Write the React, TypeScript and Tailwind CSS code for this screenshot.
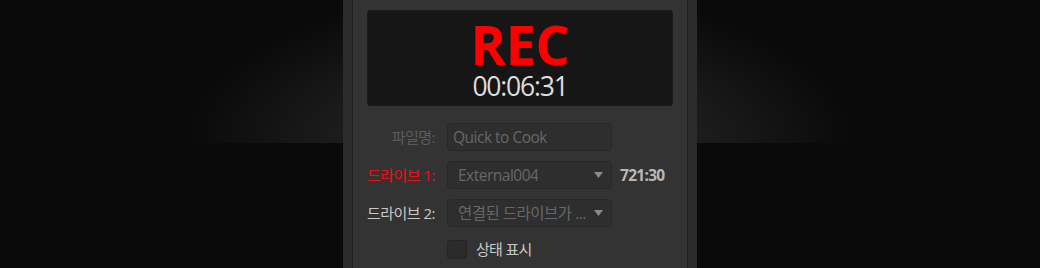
const font = { fontFamily: '"Open Sans", "Noto Sans CJK KR", sans-serif' };

function Caret() {
  return (
    <svg width="9" height="6" viewBox="0 0 9 6" className="shrink-0">
      <path d="M0 0h9L4.5 6z" fill="#8a8a8a" />
    </svg>
  );
}

function Field({ children, select }: { children: React.ReactNode; select?: boolean }) {
  return (
    <div
      className={
        select
          ? "flex h-[28px] w-[165px] items-center justify-between rounded-[4px] border border-[#282828] bg-[#2e2e2e] pr-[8px] pl-[10px]"
          : "flex h-[28px] w-[165px] items-center justify-between rounded-[4px] border border-[#282828] bg-[#2e2e2e] pr-[8px] pl-[5px]"
      }
    >
      <span className="truncate text-[15.5px] leading-[20px] tracking-[-0.5px] text-[#676767]">{children}</span>
      {select && <Caret />}
    </div>
  );
}

export default function App() {
  return (
    <div className="relative h-[268px] w-[1040px] overflow-hidden bg-[#0a0a0a]" style={font}>
      <div className="absolute top-0 left-0 h-[143px] w-full bg-[radial-gradient(ellipse_330px_150px_at_520px_143px,#2d2d2d_0%,#1c1c1c_55%,#0a0a0a_100%)]" />
      <div className="relative mx-auto flex h-full w-[354px] bg-[#2c2c2c] px-[9px]">
        <div className="flex flex-1 flex-col border-x border-[#202020] bg-[#333333] px-[14px] pt-[10px]">
          <div className="flex h-[96px] flex-col items-center rounded-[3px] border border-[#1a1a1a] bg-[#161616]">
            <div className="mt-[6px] text-[54px] leading-[54px] font-bold tracking-[-0.5px] text-[#ff0000]">REC</div>
            <div className="mt-[2px] text-[26.5px] leading-[26px] tracking-[-1.2px] text-[#dddddd]">00:06:31</div>
          </div>

          <div className="mt-[17px] -ml-[14px] grid grid-cols-[82px_165px_auto] items-center gap-x-[12px] gap-y-[10px]">
            <div className="text-right text-[15px] leading-[20px] tracking-[-0.5px] text-[#5c5c5c]">파일명:</div>
            <Field>Quick to Cook</Field>
            <div />

            <div className="text-right text-[15px] leading-[20px] tracking-[-0.5px] text-[#ee1111]">드라이브 1:</div>
            <Field select>External004</Field>
            <div className="-ml-[4px] text-[15.5px] leading-[20px] font-bold tracking-[-0.7px] text-[#b8b8b8]">721:30</div>

            <div className="text-right text-[15px] leading-[20px] tracking-[-0.5px] text-[#c8c8c8]">드라이브 2:</div>
            <Field select>연결된 드라이브가 ...</Field>
            <div />

            <div />
            <div className="mt-[2px] flex items-center gap-[9px]">
              <div className="h-[19px] w-[20px] rounded-[3px] border border-[#242424] bg-[#2b2b2b]" />
              <span className="text-[15px] leading-[20px] tracking-[-0.7px] text-[#c8c8c8]">상태 표시</span>
            </div>
            <div />
          </div>
        </div>
      </div>
    </div>
  );
}
